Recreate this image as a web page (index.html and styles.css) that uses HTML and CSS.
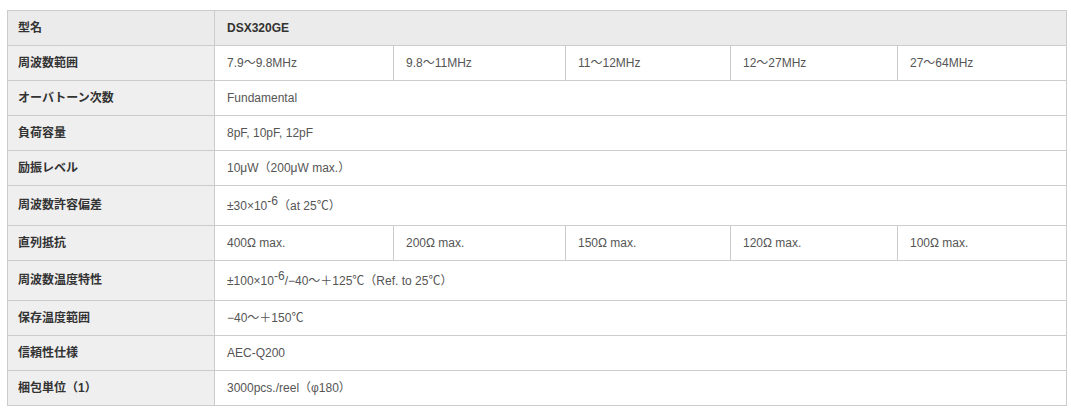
FILE: index.html
```html
<!DOCTYPE html>
<html lang="ja">
<head>
<meta charset="utf-8">
<title>DSX320GE</title>
<link rel="stylesheet" href="styles.css">
</head>
<body>
<div class="wrap">
<table class="spec">
  <colgroup>
    <col class="c-label">
    <col class="c1">
    <col class="c2">
    <col class="c3">
    <col class="c4">
    <col class="c5">
  </colgroup>
  <tbody>
    <tr class="head">
      <th>型名</th>
      <th colspan="5">DSX320GE</th>
    </tr>
    <tr>
      <th>周波数範囲</th>
      <td>7.9～9.8MHz</td>
      <td>9.8～11MHz</td>
      <td>11～12MHz</td>
      <td>12～27MHz</td>
      <td>27～64MHz</td>
    </tr>
    <tr>
      <th>オーバトーン次数</th>
      <td colspan="5">Fundamental</td>
    </tr>
    <tr>
      <th>負荷容量</th>
      <td colspan="5">8pF, 10pF, 12pF</td>
    </tr>
    <tr>
      <th>励振レベル</th>
      <td colspan="5">10μW（200μW max.）</td>
    </tr>
    <tr class="tall">
      <th>周波数許容偏差</th>
      <td colspan="5">±30×10<sup>-6</sup>（at 25℃）</td>
    </tr>
    <tr>
      <th>直列抵抗</th>
      <td>400Ω max.</td>
      <td>200Ω max.</td>
      <td>150Ω max.</td>
      <td>120Ω max.</td>
      <td>100Ω max.</td>
    </tr>
    <tr class="tall">
      <th>周波数温度特性</th>
      <td colspan="5">±100×10<sup>-6</sup>/−40～＋125℃（Ref. to 25℃）</td>
    </tr>
    <tr>
      <th>保存温度範囲</th>
      <td colspan="5">−40～＋150℃</td>
    </tr>
    <tr>
      <th>信頼性仕様</th>
      <td colspan="5">AEC-Q200</td>
    </tr>
    <tr>
      <th>梱包単位（1）</th>
      <td colspan="5">3000pcs./reel（φ180）</td>
    </tr>
  </tbody>
</table>
</div>
</body>
</html>
```
FILE: styles.css
```css
html, body {
  margin: 0;
  padding: 0;
  background: #ffffff;
}

.wrap {
  padding: 10px 0 0 7px;
}

.spec {
  width: 1059px;
  border-collapse: collapse;
  table-layout: fixed;
  font-family: "Liberation Sans", Arial, "Noto Sans CJK JP", sans-serif;
  font-size: 12px;
  color: #555555;
}

.c-label { width: 207px; }
.c1 { width: 179px; }
.c2 { width: 172px; }
.c3 { width: 165px; }
.c4 { width: 167px; }
.c5 { width: 169px; }

.spec th,
.spec td {
  border: 1px solid #cccccc;
  padding: 8px 12px;
  line-height: 18px;
  text-align: left;
  vertical-align: middle;
  white-space: nowrap;
}

.spec th {
  background: #efefef;
  color: #333333;
  font-weight: bold;
  padding-left: 10px;
}

.spec .tall th,
.spec .tall td {
  padding-top: 11px;
  padding-bottom: 10px;
}

.spec .tall th {
  padding-top: 10px;
  padding-bottom: 11px;
}

.spec .head th {
  background: #ebebeb;
}

.spec .head th + th {
  padding-left: 12px;
}

.spec td {
  background: #ffffff;
}

.spec sup {
  font-size: 12px;
  line-height: 0;
  vertical-align: 5px;
}
```
